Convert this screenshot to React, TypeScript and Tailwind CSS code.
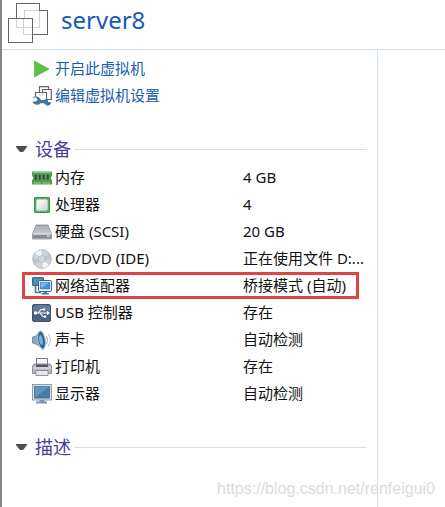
import { useState } from "react";
import type { ReactNode } from "react";

function MachineLogo() {
  return (
    <svg width="40" height="40" viewBox="0 0 40 40" fill="none" aria-hidden="true">
      <rect x="8.5" y="0.5" width="23" height="24" fill="#fff" stroke="#666" />
      <rect x="16.5" y="7.5" width="23" height="24" fill="#fff" stroke="#666" />
      <rect x="0.5" y="15.5" width="24" height="24" fill="#fff" stroke="#666" />
      <path d="M16.500 15V7.500H31M31.500 8V24.500H25M8.500 16V24.500H15.500V31.500H24M15.500 24.500V16M16 24.500H24" stroke="#cdd2e2" />
      <path d="M8.500 15V0.500H31.500V7M32 7.500H39.500V31.500H25M24.500 39.500H0.500V15.500H24.500Z" stroke="#666" />
    </svg>
  );
}

function PlayIcon() {
  return (
    <svg width="20" height="20" viewBox="0 0 20 20" aria-hidden="true">
      <path d="M2.500 2L17 10L2.500 18Z" fill="#5fbf47" stroke="#4fae3b" strokeWidth="0.6" />
    </svg>
  );
}

function SettingsIcon() {
  return (
    <svg width="20" height="20" viewBox="0 0 20 20" fill="none" aria-hidden="true">
      <path d="M7.500 6V0.700H16.500V3M10.500 6V3.500H19.300V13.500H15M3.500 10V6.500H14.500V12.500" stroke="#666" strokeWidth="1.200" />
      <path d="M7 9H9M10.500 7V10M12 5H14" stroke="#c3cad8" />
      <path
        d="M0.500 11.500H4L5.500 13.500L4 15.500H0.500C1.500 19 6 20 8.500 17.200H12L14.500 19.500C18 20 19.500 17.500 18.500 16H16V14H18C16 12 13.500 12.500 12.300 14H9C7.500 10.500 3 9 0.500 11.500Z"
        fill="#4674a5"
      />
    </svg>
  );
}

function MemoryIcon() {
  return (
    <svg width="20" height="20" viewBox="0 0 20 20" aria-hidden="true">
      <path d="M0 3.500H20V8L19 9V11L20 12V16.500H0V12L1 11V9L0 8Z" fill="#48a34d" />
      <path d="M1 4.500H19" stroke="#83c987" />
      <path d="M2.500 6.500H5V12H2.500ZM6.500 6.500H9V12H6.500ZM10.500 6.500H13V12H10.500ZM14.500 6.500H17V12H14.500Z" fill="#27482f" stroke="#6d8b71" strokeWidth="0.7" />
      <path d="M2 15H9M11 15H18" stroke="#c7c774" strokeWidth="1.500" strokeDasharray="1 0.600" />
    </svg>
  );
}

function CpuIcon() {
  return (
    <svg width="20" height="20" viewBox="0 0 20 20" aria-hidden="true">
      <defs>
        <linearGradient id="cpu" x2="1" y2="1">
          <stop stopColor="#ffffff" />
          <stop offset="1" stopColor="#cfd3d2" />
        </linearGradient>
      </defs>
      <rect x="2.500" y="2.500" width="15" height="15" rx="0.500" fill="#58b065" stroke="#3a924c" />
      <rect x="4.500" y="4.500" width="11" height="11" rx="1.500" fill="url(#cpu)" stroke="#bde0c2" strokeWidth="0.600" />
    </svg>
  );
}

function DiskIcon() {
  return (
    <svg width="20" height="20" viewBox="0 0 20 20" aria-hidden="true">
      <defs>
        <linearGradient id="disk" x2="0" y2="1">
          <stop stopColor="#a3abb6" />
          <stop offset="1" stopColor="#dde1e5" />
        </linearGradient>
      </defs>
      <path d="M4 3H16L19.500 12V17H0.500V12Z" fill="url(#disk)" stroke="#7b828b" strokeWidth="0.700" />
      <path d="M1 12.500H19V16.500H1Z" fill="#858d99" />
      <path d="M1 12H19" stroke="#edf0f3" strokeWidth="0.800" />
      <rect x="15" y="13.500" width="2.500" height="1.500" fill="#d8e58c" />
    </svg>
  );
}

function DiscIcon() {
  return (
    <svg width="20" height="20" viewBox="0 0 20 20" aria-hidden="true">
      <circle cx="10" cy="10" r="9.300" fill="#cdd4dc" stroke="#a3abb5" strokeWidth="0.800" />
      <path d="M10 10L3 4A9 9 0 0 1 9 1ZM10 10L17 16A9 9 0 0 1 11 19Z" fill="#f5f7f9" />
      <path d="M10 10L1 9A9 9 0 0 0 3 15.500ZM10 10L19 11A9 9 0 0 0 17 4.500Z" fill="#bcc6d1" />
      <circle cx="10" cy="10" r="3.400" fill="#e3e8ed" stroke="#97a4b3" strokeWidth="0.700" />
      <circle cx="10" cy="10" r="1.400" fill="#fff" stroke="#8d99a7" strokeWidth="0.600" />
    </svg>
  );
}

function NetworkIcon() {
  return (
    <svg width="20" height="20" viewBox="0 0 20 20" aria-hidden="true">
      <path d="M3.500 10V16.500H9" fill="none" stroke="#427f94" strokeWidth="1.600" />
      <rect x="0.500" y="1.500" width="11" height="8" rx="0.500" fill="#4f8ca8" stroke="#3c657e" />
      <rect x="2" y="3" width="8" height="5" fill="#498fc0" />
      <rect x="6.500" y="4.500" width="13" height="11" rx="1" fill="#e3eef7" stroke="#3c6288" />
      <rect x="8.700" y="6.300" width="9" height="6.500" fill="#4197e3" stroke="#2a66ab" strokeWidth="0.700" />
      <path d="M9 12V6.500H17Z" fill="#76bcf2" />
      <path d="M11.500 15.500H15V17H17V18.500H9.500V17H11.500Z" fill="#547798" />
    </svg>
  );
}

function UsbIcon() {
  return (
    <svg width="20" height="20" viewBox="0 0 20 20" fill="none" aria-hidden="true">
      <rect x="0.500" y="1.500" width="18" height="17" rx="1.500" fill="#4c6483" stroke="#3d5472" />
      <path d="M1 3C5 1.500 14 1.500 18 3V8L1 10Z" fill="#647b99" />
      <path d="M3 10H15.500M6 10L9 6.500H12M8 10L11 13.500H13" stroke="#fff" strokeWidth="1.100" />
      <path d="M15 7.800L18 10L15 12.200Z" fill="#fff" />
      <circle cx="3.500" cy="10" r="1.700" fill="#fff" />
      <circle cx="12" cy="6.500" r="1.200" fill="#fff" />
      <rect x="12" y="12.500" width="2.200" height="2.200" fill="#fff" />
    </svg>
  );
}

function SoundIcon() {
  return (
    <svg width="20" height="20" viewBox="0 0 20 20" fill="none" aria-hidden="true">
      <path d="M0.500 7L4 6L8 1C13 1 14 17 11 19.500L5 14.500L0.500 13Z" fill="#86a9c8" stroke="#557898" strokeWidth="0.700" />
      <ellipse cx="9.500" cy="10" rx="3.700" ry="9" transform="rotate(-10 9.500 10)" fill="#2d628e" stroke="#a6cbe6" />
      <ellipse cx="9" cy="10" rx="1.800" ry="5" transform="rotate(-10 9 10)" fill="#72b3df" />
      <path d="M14.500 6.500Q16.500 10 14.500 14" stroke="#8faabd" />
      <path d="M16.500 4.500Q20 10 16.500 16" stroke="#b2c1cc" />
    </svg>
  );
}

function PrinterIcon() {
  return (
    <svg width="20" height="20" viewBox="0 0 20 20" aria-hidden="true">
      <path d="M4.500 1.500H15.500V9H4.500Z" fill="#f6f6f8" stroke="#777a83" />
      <path d="M2 7H18L19.500 9V16.500H0.500V9Z" fill="#b7bac2" stroke="#777b85" strokeWidth="0.800" />
      <path d="M4 7.500H16V10H4Z" fill="#555862" />
      <path d="M1 11H19" stroke="#e6e7eb" />
      <path d="M4 13.500H16V18.500H4Z" fill="#fafafa" stroke="#777a83" strokeWidth="0.800" />
      <path d="M5.500 15H14.500M5.500 17H14.500" stroke="#bdbfc7" strokeWidth="0.700" />
    </svg>
  );
}

function DisplayIcon() {
  return (
    <svg width="20" height="20" viewBox="0 0 20 20" aria-hidden="true">
      <rect x="0.500" y="0.500" width="19" height="15.500" fill="#d9e2eb" stroke="#78899a" strokeWidth="0.800" />
      <rect x="2.300" y="2.300" width="15.400" height="11.800" fill="#4b7ca3" stroke="#2f5a80" strokeWidth="0.600" />
      <path d="M2.600 13.800V2.600H17.400Z" fill="#6595ba" />
      <path d="M7.500 16H12.500V17.500H15V19.500H4V17.500H7.500Z" fill="#7896b2" />
    </svg>
  );
}

type Device = {
  name: string;
  value: string;
  icon: ReactNode;
  highlighted?: boolean;
};

const devices: Device[] = [
  { name: "内存", value: "4 GB", icon: <MemoryIcon /> },
  { name: "处理器", value: "4", icon: <CpuIcon /> },
  { name: "硬盘 (SCSI)", value: "20 GB", icon: <DiskIcon /> },
  { name: "CD/DVD (IDE)", value: "正在使用文件 D:...", icon: <DiscIcon /> },
  { name: "网络适配器", value: "桥接模式 (自动)", icon: <NetworkIcon />, highlighted: true },
  { name: "USB 控制器", value: "存在", icon: <UsbIcon /> },
  { name: "声卡", value: "自动检测", icon: <SoundIcon /> },
  { name: "打印机", value: "存在", icon: <PrinterIcon /> },
  { name: "显示器", value: "自动检测", icon: <DisplayIcon /> },
];

function Section({ title, children }: { title: string; children?: ReactNode }) {
  const [open, setOpen] = useState(true);

  return (
    <section className="mt-[25px]">
      <div className="flex h-[30px] items-center gap-[3px] pr-[10px] pl-[14px]">
        <h2>
          <button
            onClick={() => setOpen(!open)}
            aria-expanded={open}
            className="flex items-center gap-2 text-[18px] leading-[30px] text-[#4a3a9e]"
          >
            <svg
              width="11"
              height="6"
              viewBox="0 0 11 6"
              aria-hidden="true"
              className={open ? "" : "-rotate-90"}
            >
              <path d="M0 0H11V1L7 6H4L0 1Z" fill="#4d4d4d" />
            </svg>
            {title}
          </button>
        </h2>
        <div className="h-px flex-1 bg-[#d9dddf]" />
      </div>
      {open && children}
    </section>
  );
}

export default function App() {
  return (
    <div className="relative flex min-h-screen flex-col border-l-2 border-[#858585] bg-[#fefefe] font-['Noto_Sans','Noto_Sans_CJK_SC',sans-serif] text-[15px] text-[#111]">
      <header className="flex h-[50px] gap-[13px] border-b border-[#cfe2ee] pt-[3px] pl-[6px]">
        <MachineLogo />
        <h1 className="text-[24px] leading-[34px] text-[#145cb8]">server8</h1>
      </header>

      <div className="flex flex-1">
        <main className="min-w-0 flex-1 pt-[5px]">
          <nav className="flex flex-col items-start pl-[30px] text-[#1a5fae]">
            <a href="#power-on" className="flex h-[27px] items-center gap-[3px]">
              <PlayIcon />
              开启此虚拟机
            </a>
            <a href="#settings" className="flex h-[27px] items-center gap-[3px]">
              <SettingsIcon />
              编辑虚拟机设置
            </a>
          </nav>

          <Section title="设备">
            <table className="w-full table-fixed border-collapse">
              <tbody>
                {devices.map((device) => (
                  <tr key={device.name} className="relative h-[27px]">
                    <th scope="row" className="w-[241px] p-0 pl-[30px] text-left font-normal">
                      <div className="flex h-[27px] items-center gap-[3px]">
                        {device.icon}
                        {device.name}
                      </div>
                      {device.highlighted && (
                        <span className="pointer-events-none absolute inset-y-0 right-[18px] left-[20px] border-3 border-[#e04444]" />
                      )}
                    </th>
                    <td className="p-0 leading-[27px] whitespace-nowrap">{device.value}</td>
                  </tr>
                ))}
              </tbody>
            </table>
          </Section>

          <Section title="描述" />
        </main>
        <aside className="w-[68px] border-l border-[#cfe2ee]" />
      </div>

      <p className="pointer-events-none absolute right-[10px] bottom-[6px] font-['Liberation_Sans',sans-serif] text-[16px] leading-6 text-[#dcdcdc]">
        https://blog.csdn.net/renfeigui0
      </p>
    </div>
  );
}
